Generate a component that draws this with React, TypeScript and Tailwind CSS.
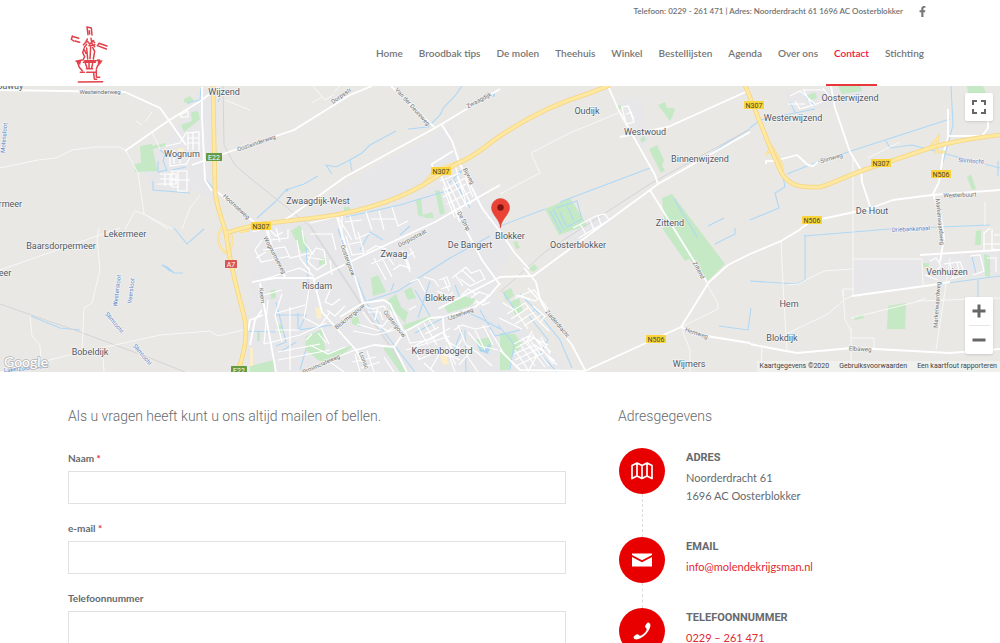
import { FaFacebookF } from "react-icons/fa";

const navItems = [
  "Home",
  "Broodbak tips",
  "De molen",
  "Theehuis",
  "Winkel",
  "Bestellijsten",
  "Agenda",
  "Over ons",
  "Contact",
  "Stichting",
];

const fields = [
  { id: "naam", label: "Naam", type: "text", required: true },
  { id: "email", label: "e-mail", type: "email", required: true },
  { id: "telefoon", label: "Telefoonnummer", type: "tel", required: false },
];

// built up areas
const urban = [
  "M248 226L337 217L400 203L450 180L470 172L484 186L500 222L512 250L492 292L530 330L572 372H246L250 290Z",
  "M150 160L175 130L200 92H220L214 200L196 190L190 192H153L142 165Z",
  "M300 216L370 170L452 124L456 160L410 190L340 214Z",
  "M620 100L640 96L650 140L640 150Z",
  "M785 92L865 86V102L790 112Z",
  "M853 259H920V285L853 295ZM921 255L1000 250V275L921 282Z",
  "M560 226L608 214L612 222L572 248Z",
];

const parks = [
  "M140 146L152 144L156 165L158 171L135 172L134 164L141 163Z",
  "M181 125L192 121L191 112L198 111L200 119L184 132Z",
  "M184 99L190 96L194 100L189 104L184 102Z",
  "M152 146L165 143V146L153 149Z",
  "M545 209L570 198L587 225L559 235Z",
  "M658 105L665 102L667 108L675 108L673 115L670 121Z",
  "M649 149L657 145L664 160L662 166L665 170L661 173Z",
  "M640 139L644 136L646 140L642 143Z",
  "M617 106L621 105V109L618 110Z",
  "M662 198L672 194L725 264L707 282L665 228Z",
  "M662 228L678 226L691 258L685 261Z",
  "M967 86H983L986 93H968Z",
  "M967 177L971 174L976 189L972 190Z",
  "M888 306L906 303L905 329H887Z",
  "M976 231L981 230V245H975Z",
  "M984 254L990 256L990 277L985 276Z",
  "M416 200L421 198L423 217L418 215Z",
  "M423 215L432 212L434 218L425 218ZM435 190L440 191L445 213L440 215Z",
  "M344 207H350V212H344Z",
  "M371 278L378 275L386 292L373 296Z",
  "M388 300L396 294L401 307L408 312L405 323L396 313L390 311Z",
  "M403 325L430 316L434 319L405 330Z",
  "M444 306L462 296L476 299L470 306L448 313Z",
  "M404 291L411 287L416 298L408 300Z",
  "M305 337L322 329L326 353L355 345L340 356L322 363L306 350Z",
  "M383 348L393 346L406 372H400Z",
  "M250 366L274 360V372H250Z",
  "M291 231L300 225L309 250L302 253Z",
  "M319 259L325 258L326 263L319 266Z",
  "M270 291L275 289L276 298L271 299Z",
  "M257 331H260V341H257Z",
  "M277 326L281 324L284 331L279 334Z",
  "M351 316L357 314L361 327L352 324Z",
  "M503 292L511 288L514 296L506 301ZM510 302L519 298L523 311L515 315Z",
  "M500 333L515 334L523 345L512 356L509 370H500Z",
  "M475 340L490 337L492 350L480 352Z",
  "M529 269L534 264L538 268L533 272Z",
  "M513 242L517 241L520 248L516 249Z",
  "M854 317L863 314L864 318L855 320Z",
  "M806 96L815 92L817 98L808 101ZM838 86L860 86L862 91L842 94Z",
  "M923 263H929V267H923Z",
];

const streams = [
  "M201 88L200 100L187 103M218 102L220 98M160 150L165 154L163 161L167 170L158 172V161M153 181V190L190 193M172 170L186 167M206 180L215 190",
  "M462 86L455 96L444 107L440 115L428 127L408 129M396 131L370 145L362 153L348 161L336 167L326 165L332 174M350 160L352 171M318 176L304 184L286 190L275 202L257 218",
  "M500 226L545 209M560 202L650 168M550 211L561 232M553 209L564 230M556 208L577 201L582 219L567 227L560 212M567 206L574 221",
  "M712 153L728 142L750 129M750 128L760 120L815 109M674 199L697 237M708 226L724 218M715 244L735 234V228",
  "M783 176L785 187L775 193L779 208L750 220M787 174L815 163L848 152L950 119M886 141L890 148L912 145L950 155L1000 168M951 86L953 125L943 162",
  "M998 161V176M804 236L890 229L990 225M805 235V280L796 284L750 281M719 326L748 330L751 308M940 284L1000 276M978 280V299M972 257L976 273",
  "M174 228L187 244L204 229M162 265L174 273H183",
  "M338 229L346 252L366 302L384 332L415 372M275 315H306L299 330M276 302L286 342L276 346M298 313V330L332 325M306 246L309 295",
  "M346 217L400 205L450 190M365 302L398 291L450 258L490 236M391 291L394 283",
  "M415 290L430 316M415 333L445 317L462 310L480 318L500 329M430 281L418 318M462 330L450 360M455 285L460 298M480 310L495 336L520 330",
  "M465 330L466 372M520 294L535 309L560 340L572 368M535 309L529 316L548 340L540 354L557 372M498 325L514 344L510 370M503 292L515 310",
  "M360 250L370 232L383 240M306 349L300 370M245 331L276 332M400 235L410 226M448 184L463 170M454 180L470 208M280 352L296 342",
  "M10 372L50 367M31 316L60 328L80 330M790 102L795 112M801 92L815 106",
];

const minorRoads = [
  "M0 168L38 160L56 158L72 150L95 147H120L126 151L138 173L144 214M126 150L152 132M125 229L135 211L144 214L172 229M152 132L160 149M144 214L168 229M200 195L190 208L182 229",
  "M99 228L97 238L100 270L92 303L84 308L82 351M0 270L120 228M0 372L70 355L160 335L210 331L218 336L243 330M30 315L32 336L40 345L41 365M103 358L104 372",
  "M136 121L142 125M145 122L152 112M250 110L225 100M313 86L325 100L335 94M322 97L312 103M340 86L334 92",
  "M500 194L540 173L531 153L570 133L618 113M706 282L718 304L718 309L681 327M690 350V372M681 327L690 350",
  "M781 240L783 285L787 350M787 285L798 284L824 271L853 269M853 158V295M853 259L922 259M922 259L923 285M786 334L828 314L845 299L852 296M843 296V289H853M852 338H874V350",
  "M851 328V372M843 290L845 320L851 330M762 345L761 372M851 318L920 301L1000 298M915 302L926 298M985 202V225M950 258L936 350M868 158L900 142",
];

// residential streets, drawn thin
const streets = [
  "M160 174H176V184H157M160 179H175M165 174V186M170 174V186M172 171H187V191H178V187H172ZM172 180H190M178 171V190M166 146L180 143L186 133L199 132V151L190 157L186 165M170 150V166L186 164M174 150V164M180 150V163M188 133V150M193 133V150M187 143H199M187 138H199M180 115L188 111V117L181 117Z",
  "M310 223L335 217M310 234H332L336 250M342 216V240M338 217L352 240M350 216L356 239L370 233M366 212L372 230M379 211L384 230M392 207L398 226L408 221M371 219H395M345 222L362 220",
  "M346 236L352 255L364 253L358 232M350 244L360 242M366 252L376 246L386 249M374 258L386 280M380 254L392 277M386 254L394 265M371 264L390 256M393 270L400 265L410 268L406 257L414 252M402 250L410 272M410 248L415 258",
  "M252 232L268 228L270 240L288 238V229M276 228L280 242M262 240L255 250L261 262L290 256M263 250L285 247L290 258L310 253M270 230L276 236L283 232M256 258L266 252",
  "M302 230L304 242L314 255M312 252L308 262L317 270L326 264L324 250L316 248L312 254M307 257L324 260M303 262L310 270M297 240L300 258L312 275M330 260L332 275",
  "M262 280L300 268L314 276M260 296L282 290M277 313L305 305M282 294L275 315L282 342M309 290L304 318L320 326L330 312M330 290L325 302L332 305L340 299M327 310L335 316L345 306",
  "M264 344L300 335L326 323M268 300L264 344M276 330H300M290 307V370M278 352L320 344M278 360L330 350M306 340L312 334M318 333L326 343M321 328L329 344",
  "M362 305L372 309L384 306L390 317L383 326L371 323L363 312M368 312L380 312L383 320M378 307L375 320M390 310L396 326L388 331L377 325M353 331L375 335L395 330M357 324L380 331",
  "M424 277L434 280L439 287M439 280L447 277L450 286L441 289M444 279L449 291M452 278L466 267L471 273L480 270L485 279L470 286L460 279M456 276L463 286M462 270L475 282M437 291L449 296L453 292",
  "M410 282L418 279L425 292M409 310L416 306M438 309L445 305M471 298L479 292L488 295L484 302L474 303M475 300L483 305L490 302M461 296L468 289L476 294",
  "M405 330L410 343L430 340L450 328M418 327L428 345M424 323L437 345M412 347L443 332L447 342M425 334L439 327M406 350L450 336M428 318L436 330",
  "M454 330L462 325L475 329L490 326M458 325L466 345L478 353L492 366M448 342L463 350L478 372M468 332L480 346L498 350M462 339L450 358L455 372M470 352L459 365",
  "M430 370L440 353L450 357M418 360L436 352M424 363L434 372M411 345L420 360M440 350L460 360M446 346L456 365M475 330L485 350M483 325L493 345M490 330L504 354",
  "M503 303L515 310L528 329M507 314L525 303L539 321L549 331M524 326L541 315M511 319L528 308M515 324L534 312M499 318L522 329M532 331L527 341L537 355L528 372",
  "M514 344L529 336L548 345M516 348L534 338L551 352M514 354L535 345L555 361M515 360L540 348L557 365M516 366L543 353M522 338L545 367M527 336L549 366M532 334L553 364M520 344L535 366M515 350L528 370M541 337L550 354",
  "M435 175L455 165L466 203M440 181L460 173M445 190L465 178L473 197M443 187L455 218M447 181L462 211M452 179L467 207M457 176L471 204M443 197L466 184M447 204L470 192M451 212L475 200",
  "M790 96L800 91L815 104M803 89L812 106L830 98L823 88M795 101L800 109L813 105M788 104H805M803 90H825",
  "M930 261L936 258L941 266L935 272M944 264L960 262L965 275L950 279M950 264L953 278M957 262L960 276M925 275L938 280M970 256L980 255L984 271L973 275M984 252V233L990 228M992 229V249L1000 250M994 235H1000M984 244H1000M987 258H996V272",
  "M573 228L596 216L605 214L609 220L579 238M580 224L586 234M590 220L594 230M598 216L601 225M622 107L628 106L634 122L626 124ZM626 114L632 112M628 106L634 119",
  "M310 345L328 354L345 347M330 362L344 372M355 354L360 372M367 351L374 372M337 357L358 349M352 362L376 357M361 368L380 362M384 357L394 372",
  "M515 298L534 290L548 309M516 295L530 300M519 295L535 301L538 299L528 288M533 306L545 316L540 323",
];

const whiteRoads = [
  "M0 90L125 92L160 108L168 119L186 145M125 151L168 121L202 100L218 87M202 87L202 117L205 180L212 191M192 165L206 160L240 148L294 130L350 95L372 86M216 191L240 210L255 223",
  "M285 220L345 177L435 128L500 89M391 86L434 127M442 125L452 141L459 162L482 208L504 237L514 252L529 269M433 171L432 164L453 151",
  "M608 86L619 111L655 175L658 184M658 184L650 190L533 276M650 190L707 282M658 184L750 132M620 137L668 127L750 90",
  "M831 86L835 108L850 152L861 170L862 182L871 209M871 208L893 200L932 195L1000 190M933 194L941 217L944 238L940 262M933 194L939 182L943 155L948 137L948 109M800 229L812 221L850 213L872 208M766 164V161L774 161L797 155L808 165L813 166L818 162M948 136H982L988 128V117",
  "M533 276L500 277L440 308M524 268L536 282L540 300L547 312L572 345L585 370M585 371L600 364L681 327L709 282L728 265L750 254L781 241L801 229M681 327L700 335L750 343M585 371L520 370L500 350",
  "M252 282L275 278H313M260 283L276 372M313 277L322 312L356 350L374 345L394 347L407 372M313 280L360 257L435 222L500 185M337 217L350 260L363 303L384 300L390 304L404 333M363 303L340 317",
  "M394 347L404 332L430 318L443 317L475 307L490 295L500 283M356 350L362 362M443 318L444 333L455 355M266 229L275 255L285 277M248 331L250 320L263 315M250 345L255 320L262 310",
  "M465 228L482 260L500 285M440 173L460 222M750 344L770 348L797 353L852 348L875 349L950 353L1000 349M852 296L932 285L950 282M920 255L1000 250",
];

const mainRoads = [
  "M213 86L215 190C216 206 222 218 226 234C230 264 237 290 243 312C249 331 245 350 238 372",
  "M226 233C240 229 255 224 270 223L305 219C355 214 395 201 423 185L458 163C475 157 485 146 500 136C525 119 553 104 590 93L610 85",
  "M745 85L770 147L781 172C788 184 796 188 820 187C835 183 850 174 870 168L930 148C950 142 975 138 1000 135",
];

const ramps =
  "M222 228C216 236 217 246 226 253C232 250 234 240 230 232M423 184L435 170L458 162M575 98L600 90M766 155L772 147L781 162L783 172M930 147L938 137L936 152L945 152M240 232L250 230";

const places: [string, number, number][] = [
  ["Wijzend", 224, 95],
  ["Wognum", 182, 157],
  ["Zwaagdijk-West", 318, 204],
  ["Lekermeer", 125, 237],
  ["Baarsdorpermeer", 61, 249],
  ["Zwaag", 394, 257],
  ["De Bangert", 470, 248],
  ["Blokker", 510, 239],
  ["Risdam", 317, 289],
  ["Blokker", 440, 301],
  ["Kersenboogerd", 442, 354],
  ["Bobeldijk", 90, 355],
  ["Oosterblokker", 578, 248],
  ["Oudijk", 587, 114],
  ["Westwoud", 645, 135],
  ["Binnenwijzend", 700, 162],
  ["Zittend", 670, 226],
  ["Oosterwijzend", 850, 101],
  ["Westerwijzend", 793, 121],
  ["De Hout", 872, 214],
  ["Venhuizen", 947, 275],
  ["Hem", 789, 307],
  ["Blokdijk", 782, 341],
  ["Wijmers", 689, 367],
  ["ermeer", 8, 207],
  ["eer", 5, 276],
  ["Spouwuy", 5, 89],
];

const roadNames: [string, number, number, number][] = [
  ["Westeinderweg", 100, 94, 0],
  ["Oosteinderweg", 257, 145, -19],
  ["Dorpsstr.", 343, 97, -35],
  ["Van der Deureweg", 411, 108, 48],
  ["Zwaagdijk", 480, 102, -28],
  ["Hoornseweg", 235, 208, 43],
  ["Bijweg", 467, 177, 62],
  ["De Strip", 462, 222, 62],
  ["Dorpsstraat", 413, 240, -28],
  ["Wognumseweg", 273, 256, 62],
  ["Oostergouw", 346, 261, 70],
  ["Blokmergouw", 351, 318, -39],
  ["Oostergouw", 393, 325, 52],
  ["IJsselweg", 461, 316, -20],
  ["Keern", 260, 296, 82],
  ["Lionsc", 362, 361, 70],
  ["Provincialeweg", 322, 366, -24],
  ["Zittend", 697, 271, 62],
  ["Zuiderdracht", 556, 325, 50],
  ["Hemweg", 696, 335, 18],
  ["Slimweg", 832, 160, -17],
  ["Westerbuurt", 960, 197, -2],
  ["Markerwaardweg", 938, 222, 84],
  ["Markerwaardweg", 939, 305, -86],
  ["Elbaweg", 860, 351, 3],
];

const waterNames: [string, number, number, number][] = [
  ["Molensloot", 6, 138, -85],
  ["Westersloot", 119, 291, -83],
  ["Veersloot", 133, 291, -83],
  ["Slimtocht", 113, 324, 50],
  ["Slimtocht", 141, 356, 50],
  ["Slimtocht", 971, 163, 4],
  ["Driebankanaal", 911, 231, -3],
  ["Lakerzuidersloot", 26, 370, -6],
];

const shields: [string, number, number, string][] = [
  ["N307", 261, 226, "#fbd43b"],
  ["N307", 441, 171, "#fbd43b"],
  ["N307", 754, 105, "#fbd43b"],
  ["N307", 881, 163, "#fbd43b"],
  ["N506", 812, 220, "#fbd43b"],
  ["N506", 941, 174, "#fbd43b"],
  ["N506", 656, 339, "#fbd43b"],
  ["E22", 214, 157, "#659a42"],
  ["E22", 239, 370, "#659a42"],
  ["A7", 231, 264, "#d95555"],
];

function Logo() {
  return (
    <svg viewBox="30 21 114 174" className="h-[58px] w-[38px]" fill="none" stroke="#e2404a" strokeWidth="4.5" strokeLinecap="round">
      <path d="M81 27L84 50M81 27L94 30M94 30L96 51M88 38L89 48" />
      <path d="M37 55L34 64L41 69M36 55L56 61M45 69L59 73" />
      <path d="M117 76L141 84M112 83L139 93M117 76L112 83" />
      <path d="M78 71L82 63M93 61L95 72M70 80L79 71M82 70L89 78L101 68M73 88L80 79M87 83L105 80M99 68L104 74M95 76L104 86" />
      <path d="M72 92L68 104L74 116L69 126M80 90L83 123M92 86L90 122M98 88L104 100L100 123M74 97L78 106" />
      <path d="M50 130L66 126M74 128H108M118 126L112 127M53 134L58 148L67 158M122 133L113 143L109 153M76 135L81 150M87 136V150M98 136L95 150M70 133H106M79 152H98" />
      <path d="M50 130L59 137L61 129ZM115 128L124 129L116 138Z" fill="#e2404a" />
      <path d="M61 163H73M80 163H106M101 165L103 183M109 156V177M104 184H110M111 178L119 178" />
      <path d="M55 192L128 191" />
    </svg>
  );
}

function MapDrawing() {
  return (
    <svg
      viewBox="0 86 1000 286"
      preserveAspectRatio="xMidYMid slice"
      className="block h-[286px] w-full bg-[#e9e8e5] font-[Roboto,sans-serif]"
      fill="none"
      role="img"
      aria-label="Kaart van Oosterblokker"
    >
      {urban.map((d) => <path key={d} d={d} fill="#e7e7e9" />)}
      {parks.map((d) => <path key={d} d={d} fill="#c5e8c5" />)}
      <g fill="#fbeec8">
        <path d="M315 308L320 307L322 318L317 319ZM250 348H253V366H250ZM440 356L446 354L449 364L443 365ZM178 148H184V152H178Z" />
      </g>
      <g fill="#aad5f5">
        <circle cx="493" cy="95" r="2" />
        <circle cx="287" cy="190" r="1.5" />
        <circle cx="443" cy="180" r="1.5" />
        <circle cx="460" cy="172" r="1.5" />
        <path d="M475 339L482 350L491 343L488 354L480 351ZM162 264L168 267L175 273L169 271Z" />
      </g>
      {streams.map((d) => <path key={d} d={d} stroke="#afd8f6" strokeWidth="1.1" />)}
      <path d="M223 86L224 145L235 165L250 178L310 226M0 304L80 332L150 358L185 372M500 292L545 252L650 184L750 129" stroke="#d4d4d6" strokeWidth="1" />
      <path d="M310 226L365 310L408 372" stroke="#dadadc" strokeWidth="2" />
      {minorRoads.map((d) => <path key={d} d={d} stroke="#f8f8f7" strokeWidth="1" />)}
      {streets.map((d) => <path key={d} d={d} stroke="#fff" strokeWidth="1.2" />)}
      {whiteRoads.map((d) => <path key={d} d={d} stroke="#fff" strokeWidth="1.8" strokeLinejoin="round" />)}
      <path d={ramps} stroke="#f6d98a" strokeWidth="2.4" />
      <path d={ramps} stroke="#ffe9a5" strokeWidth="1.4" />
      {mainRoads.map((d) => <path key={d} d={d} stroke="#f5d582" strokeWidth="4.6" />)}
      {mainRoads.map((d) => <path key={d} d={d} stroke="#ffe8a0" strokeWidth="3" />)}

      <g textAnchor="middle" stroke="#f5f5f4" strokeWidth="1.5" paintOrder="stroke" strokeLinejoin="round">
        <g fontSize="6" fill="#6f7173">
          {roadNames.map(([name, x, y, angle], i) => (
            <text key={i} x={x} y={y} transform={`rotate(${angle} ${x} ${y})`}>{name}</text>
          ))}
        </g>
        <g fontSize="6" fill="#5580c4">
          {waterNames.map(([name, x, y, angle], i) => (
            <text key={i} x={x} y={y} transform={`rotate(${angle} ${x} ${y})`}>{name}</text>
          ))}
        </g>
        <g fontSize="9" fill="#505866">
          {places.map(([name, x, y], i) => (
            <text key={i} x={x} y={y}>{name}</text>
          ))}
        </g>
      </g>

      {shields.map(([name, x, y, color], i) => {
        const w = name.length * 4 + 4;
        return (
          <g key={i}>
            <rect x={x - w / 2} y={y - 4} width={w} height="8" rx="0.5" fill={color} />
            <text x={x} y={y + 2.5} textAnchor="middle" fontSize="7" fill={name[0] === "N" ? "#4a4630" : "#fff"}>
              {name}
            </text>
          </g>
        );
      })}

      <path d="M500.5 228C500 219 491.5 215 491.5 207.5A9 9 0 0 1 509.5 207.5C509.5 215 501 219 500.5 228Z" fill="#ea4335" stroke="#d73a2d" strokeWidth="0.5" />
      <circle cx="500.5" cy="207.5" r="3.2" fill="#811411" />
      <text x="4" y="367" fontSize="14" fontWeight="500" fill="#fff" stroke="#b5b5b5" strokeWidth="1.5" paintOrder="stroke" className="font-[Lato,sans-serif]">
        Google
      </text>
    </svg>
  );
}

function MapIcon() {
  return (
    <svg viewBox="0 0 22 18" className="h-[18px] w-[22px]" fill="none" stroke="#fff" strokeWidth="1.7" strokeLinejoin="round">
      <path d="M1 3.5L6 1L11 3.5L16 1L21 3.5V16.5L16 14L11 16.5L6 14L1 16.5ZM6 1V14M11 3.5V16.5M16 1V14" />
    </svg>
  );
}

function MailIcon() {
  return (
    <svg viewBox="0 0 20 14" className="h-[14px] w-[20px]" fill="#fff">
      <path d="M0 0.5H20V2L10 7.2L0 2ZM0 4L10 9.2L20 4V13.5H0Z" />
    </svg>
  );
}

function PhoneIcon() {
  return (
    <svg viewBox="0 0 18 18" className="h-[18px] w-[18px]" fill="#fff">
      <path d="M11.2 11.2C9.4 13 7.3 14.2 6.4 13.4C5.2 12.2 4.5 11.3 1.9 13.4C-0.7 15.5 1.3 16.9 2.4 17.3C3.8 17.9 8.3 16.7 12.5 12.5C16.7 8.3 17.9 3.8 17.3 2.4C16.9 1.3 15.5 -0.7 13.4 1.9C11.3 4.5 12.2 5.2 13.4 6.4C14.2 7.3 13 9.4 11.2 11.2Z" />
    </svg>
  );
}

const contactItems = [
  { title: "Adres", icon: <MapIcon />, body: <>Noorderdracht 61<br />1696 AC Oosterblokker</> },
  {
    title: "Email",
    icon: <MailIcon />,
    body: <a href="mailto:info@molendekrijgsman.nl" className="text-[#e02a30]">info@molendekrijgsman.nl</a>,
  },
  {
    title: "Telefoonnummer",
    icon: <PhoneIcon />,
    body: <a href="tel:0229261471" className="text-[#e02a30]">0229 – 261 471</a>,
  },
];

export default function App() {
  return (
    <div className="h-screen overflow-hidden bg-white font-[Lato,sans-serif] text-[#666a6d]">
      <header className="px-[68px]">
        <div className="flex h-[22px] items-center justify-end gap-3.5 pr-1 text-[8px] font-semibold text-[#707070]">
          <span>Telefoon: 0229 - 261 471 | Adres: Noorderdracht 61 1696 AC Oosterblokker</span>
          <a href="#facebook" aria-label="Facebook" className="text-[#777]">
            <FaFacebookF size={11} />
          </a>
        </div>
        <div className="flex h-[64px] items-center justify-between">
          <a href="#home" aria-label="Molen de Krijgsman" className="pl-0.5">
            <Logo />
          </a>
          <nav className="flex h-full text-[10px] font-semibold text-[#757575]">
            {navItems.map((item) => (
              <a
                key={item}
                href="#"
                className={
                  item === "Contact"
                    ? "flex items-center border-y-2 border-t-transparent border-b-[#e8383a] px-2 pb-0.5 text-[#f0153c]"
                    : "flex items-center px-2 pb-0.5"
                }
              >
                {item}
              </a>
            ))}
          </nav>
        </div>
      </header>

      <section className="relative">
        <MapDrawing />
        <button aria-label="Volledig scherm" className="absolute top-[7px] right-[7px] flex size-7 items-center justify-center rounded-xs bg-white shadow">
          <svg viewBox="0 0 14 14" className="size-[14px]" fill="none" stroke="#666" strokeWidth="2">
            <path d="M1 5V1H5M9 1H13V5M13 9V13H9M5 13H1V9" />
          </svg>
        </button>
        <div className="absolute right-[7px] bottom-[18px] flex w-7 flex-col items-center rounded-xs bg-white shadow">
          <button aria-label="Inzoomen" className="flex size-7 items-center justify-center">
            <svg viewBox="0 0 14 14" className="size-[14px]" stroke="#666" strokeWidth="3">
              <path d="M7 0.5V13.5M0.5 7H13.5" />
            </svg>
          </button>
          <div className="h-px w-[21px] bg-[#e6e6e6]" />
          <button aria-label="Uitzoomen" className="flex size-7 items-center justify-center">
            <svg viewBox="0 0 14 14" className="size-[14px]" stroke="#666" strokeWidth="3">
              <path d="M0.5 7H13.5" />
            </svg>
          </button>
        </div>
        <div className="absolute right-0 bottom-0 flex h-[11px] items-center gap-2.5 bg-[#f1f1ef]/80 px-[3px] font-[Roboto,sans-serif] text-[7px] text-[#444]">
          <span>Kaartgegevens ©2020</span>
          <a href="#voorwaarden">Gebruiksvoorwaarden</a>
          <a href="#kaartfout">Een kaartfout rapporteren</a>
        </div>
      </section>

      <main className="grid grid-cols-[498fr_314fr] gap-[52px] px-[68px] pt-8">
        <section>
          <h2 className="font-[Roboto,sans-serif] text-[14px] leading-6 font-light">
            Als u vragen heeft kunt u ons altijd mailen of bellen.
          </h2>
          <form className="mt-5">
            {fields.map((field) => (
              <div key={field.id} className="mb-3.5">
                <label htmlFor={field.id} className="block pb-[3px] text-[10px] leading-5 font-bold">
                  {field.label}
                  {field.required && <span className="text-[#e02a30]"> *</span>}
                </label>
                <input id={field.id} type={field.type} className="block h-[33px] w-full border border-[#e1e1e1] bg-white px-3 text-xs outline-none" />
              </div>
            ))}
          </form>
        </section>

        <section>
          <h2 className="font-[Roboto,sans-serif] text-[14px] leading-6 font-light">Adresgegevens</h2>
          <ul className="mt-5 pl-px">
            {contactItems.map((item) => (
              <li key={item.title} className="flex gap-[21px]">
                <div className="flex flex-col items-center">
                  <div className="flex size-[46px] items-center justify-center rounded-full bg-[#e80000]">{item.icon}</div>
                  <div className="flex-1 border-l border-dashed border-[#dcdcdc]" />
                </div>
                <div className="pb-8">
                  <h3 className="font-[Roboto,sans-serif] text-[11px] leading-5 font-bold uppercase">{item.title}</h3>
                  <p className="mt-px text-[11px] leading-[18px]">{item.body}</p>
                </div>
              </li>
            ))}
          </ul>
        </section>
      </main>
    </div>
  );
}
